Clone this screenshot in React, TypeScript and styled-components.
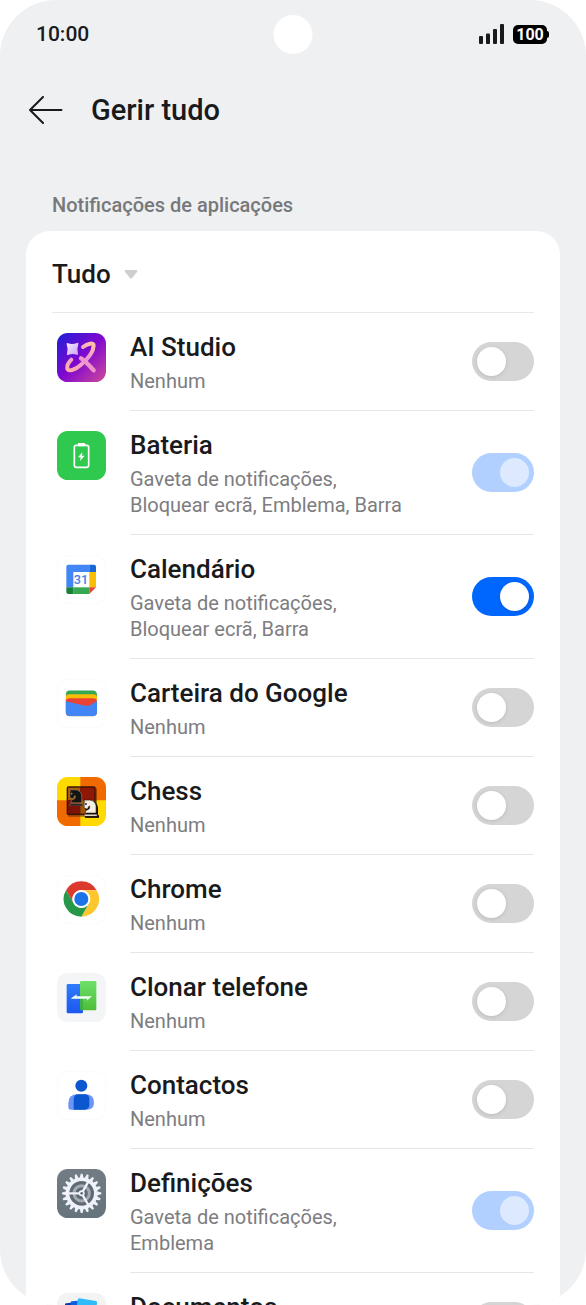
import React, { useState } from "react";
import styled, { createGlobalStyle } from "styled-components";
import { FaChessKnight } from "react-icons/fa";

const GlobalStyle = createGlobalStyle`
  *, *::before, *::after { box-sizing: border-box; }
  body {
    margin: 0;
    background: #fff;
    color: #191a1c;
    font-family: Roboto, "Noto Sans", sans-serif;
  }
`;

const Screen = styled.div`
  position: relative;
  display: flex;
  flex-direction: column;
  height: 100vh;
  overflow: hidden;
  background: #eff0f2;
  border-radius: 56px;
`;

const StatusBar = styled.header`
  display: flex;
  flex: none;
  align-items: center;
  justify-content: space-between;
  height: 68px;
  padding: 0 37px 0 36px;
`;

const Clock = styled.time`
  font-size: 21px;
  font-weight: 500;
  line-height: 24px;
`;

const Camera = styled.div`
  position: absolute;
  top: 15px;
  left: 50%;
  width: 39px;
  height: 39px;
  border-radius: 50%;
  background: #fff;
  transform: translateX(-50%);
`;

const StatusIcons = styled.div`
  display: flex;
  align-items: center;
  gap: 8px;
`;

const Battery = styled.div`
  display: flex;
  align-items: center;
`;

const BatteryBody = styled.span`
  width: 34px;
  height: 19px;
  border-radius: 5px;
  background: #000;
  color: #fff;
  font-size: 16px;
  font-weight: 700;
  line-height: 19px;
  text-align: center;
`;

const BatteryTip = styled.span`
  width: 2px;
  height: 7px;
  border-radius: 0 2px 2px 0;
  background: #000;
`;

const TitleBar = styled.div`
  display: flex;
  flex: none;
  align-items: center;
  gap: 28px;
  height: 84px;
  padding: 0 28px;
`;

const BackButton = styled.button`
  display: flex;
  padding: 0;
  border: 0;
  background: none;
  color: inherit;
  cursor: pointer;
`;

const Title = styled.h1`
  margin: 0;
  font-size: 29px;
  font-weight: 500;
  line-height: 36px;
`;

const Content = styled.main`
  display: flex;
  flex: 1;
  flex-direction: column;
  min-height: 0;
  padding: 40px 26px 0;
`;

const SectionLabel = styled.h2`
  flex: none;
  margin: 0;
  padding: 0 26px 12px;
  color: #77787a;
  font-size: 20px;
  font-weight: 500;
  line-height: 27px;
`;

const Card = styled.section`
  flex: 1;
  min-height: 0;
  overflow-y: auto;
  scrollbar-width: none;
  padding: 0 26px;
  border-radius: 24px 24px 0 0;
  background: #fff;
`;

const FilterRow = styled.div`
  display: flex;
  align-items: center;
  gap: 13px;
  height: 82px;
  padding-top: 5px;
  border-bottom: 1px solid #e8e8e8;
`;

const FilterSelect = styled.select`
  appearance: none;
  field-sizing: content;
  padding: 0;
  border: 0;
  background: none;
  color: inherit;
  font: 500 26px/36px Roboto, "Noto Sans", sans-serif;
`;

const AppList = styled.ul`
  margin: 0;
  padding: 0;
  list-style: none;
`;

const AppRow = styled.li`
  display: flex;
  gap: 24px;
  padding-left: 5px;
`;

const IconTile = styled.svg`
  flex: none;
  width: 49px;
  height: 49px;
  margin-top: 20px;
`;

const RowBody = styled.div`
  display: flex;
  flex: 1;
  align-items: center;
  justify-content: space-between;
  gap: 24px;
  padding: 17px 0 16px;
  border-bottom: 1px solid #e6e6e6;
`;

const RowLabel = styled.label`
  display: block;
  width: 280px;
`;

const AppName = styled.span`
  display: block;
  padding-bottom: 4px;
  font-size: 26px;
  font-weight: 500;
  line-height: 34px;
`;

const AppDetail = styled.span`
  display: block;
  color: #7d7d7f;
  font-size: 20px;
  line-height: 26px;
`;

const Switch = styled.input`
  display: flex;
  flex: none;
  align-items: center;
  appearance: none;
  width: 62px;
  height: 39px;
  margin: 0 0 2px;
  padding: 5px;
  border-radius: 20px;
  background: #d5d5d5;
  cursor: pointer;

  &::before {
    content: "";
    width: 29px;
    height: 29px;
    border-radius: 50%;
    background: #fff;
    box-shadow: 0 1px 4px rgba(0, 0, 0, 0.12);
  }
  &:checked {
    justify-content: flex-end;
    background: #0067fe;
  }
  &:disabled {
    background: #b1d0ff;
    cursor: default;
  }
  &:disabled::before {
    background: #dce9ff;
    box-shadow: none;
  }
`;

const WhiteTile = () => (
  <rect x="1" y="1" width="145" height="145" rx="30" fill="#fff" stroke="#f8f8f8" strokeWidth="2" />
);

const AiStudioIcon = () => (
  <IconTile viewBox="0 0 147 147" aria-hidden="true">
    <defs>
      <linearGradient id="ai-bg" x1="0" y1="0" x2="1" y2="1">
        <stop offset="0" stopColor="#1d1ed8" />
        <stop offset="0.5" stopColor="#8008cf" />
        <stop offset="1" stopColor="#d04a98" />
      </linearGradient>
      <linearGradient id="ai-pen" x1="0.8" y1="0" x2="0.2" y2="1">
        <stop offset="0" stopColor="#ffbfa8" />
        <stop offset="0.45" stopColor="#ea8fe0" />
        <stop offset="1" stopColor="#ffaea8" />
      </linearGradient>
      <linearGradient id="ai-star" x1="0" y1="0" x2="1" y2="1">
        <stop offset="0" stopColor="#f6eaff" />
        <stop offset="1" stopColor="#cda2f4" />
      </linearGradient>
    </defs>
    <rect width="147" height="147" rx="32" fill="url(#ai-bg)" />
    <path d="M78 42 C91 32 111 27 110 38 C109 57 91 79 72 95 C55 110 34 118 31 107 C29 97 35 88 43 80" fill="none" stroke="url(#ai-pen)" strokeWidth="12" strokeLinecap="round" />
    <path d="M72 76 C86 84 98 99 110 112" fill="none" stroke="#ef94c9" strokeWidth="13" strokeLinecap="round" />
    <path d="M29 33 Q28 29 33 31 Q46 36 60 30 Q65 28 64 33 Q59 47 63 62 Q64 67 59 65 Q46 60 33 66 Q28 67 30 62 Q34 48 29 33Z" fill="url(#ai-star)" />
  </IconTile>
);

const BatteryIcon = () => (
  <IconTile viewBox="0 0 147 147" aria-hidden="true">
    <rect width="147" height="147" rx="32" fill="#2fc94f" />
    <rect x="62" y="36" width="23" height="10" rx="4" fill="#fff" />
    <rect x="52" y="43" width="43" height="66" rx="6" fill="none" stroke="#fff" strokeWidth="5" />
    <path d="M76 64 L63 79 H71 L69 90 L83 74 H75Z" fill="#fff" />
  </IconTile>
);

const CalendarIcon = () => (
  <IconTile viewBox="0 0 147 147" aria-hidden="true">
    <WhiteTile />
    <path d="M34 29 H97 V51 H49 V97 H28 V35 Q28 29 34 29Z" fill="#4285f4" />
    <path d="M97 29 H111 Q117 29 117 35 V51 H97Z" fill="#1967d2" />
    <path d="M97 51 H117 V97 H97Z" fill="#fbbc04" />
    <path d="M49 97 H97 V117 H49Z" fill="#34a853" />
    <path d="M28 97 H49 V117 H34 Q28 117 28 111Z" fill="#188038" />
    <path d="M97 97 H117 L97 117Z" fill="#ea4335" />
    <text x="72" y="87" textAnchor="middle" fontFamily="Roboto, sans-serif" fontSize="38" fontWeight="500" fill="#3f7fe8">31</text>
  </IconTile>
);

const WalletIcon = () => (
  <IconTile viewBox="0 0 147 147" aria-hidden="true">
    <clipPath id="wallet-clip">
      <rect x="26" y="34" width="94" height="78" rx="13" />
    </clipPath>
    <WhiteTile />
    <g clipPath="url(#wallet-clip)">
      <rect x="26" y="34" width="94" height="78" fill="#34a853" />
      <path d="M26 56 Q26 46 38 46 H108 Q120 46 120 56 V112 H26Z" fill="#fbbc04" />
      <path d="M26 68 Q26 58 38 58 H108 Q120 58 120 68 V112 H26Z" fill="#ea4335" />
      <path d="M26 67 L84 80 Q93 82 101 77 L120 66 V112 H26Z" fill="#4285f4" />
    </g>
  </IconTile>
);

const ChessIcon = () => (
  <IconTile viewBox="0 0 147 147" aria-hidden="true">
    <clipPath id="chess-clip">
      <rect width="147" height="147" rx="32" />
    </clipPath>
    <g clipPath="url(#chess-clip)">
      <rect width="147" height="147" fill="#ffd900" />
      <path d="M70 0 H147 V70 H70Z M0 70 H70 V147 H0Z" fill="#f06a00" />
    </g>
    <rect x="32" y="32" width="88" height="87" rx="5" fill="#5a2500" opacity="0.55" />
    <rect x="29" y="28" width="87" height="86" rx="5" fill="#3a1206" />
    <path d="M33 32 H70 V70 H33Z" fill="#a55a10" />
    <path d="M70 32 H112 V70 H70Z" fill="#8f1705" />
    <path d="M33 70 H70 V110 H33Z" fill="#7b1205" />
    <path d="M70 70 H112 V110 H70Z" fill="#a45207" />
    <FaChessKnight x="32" y="35" size="52" color="#141414" stroke="#c8a27a" strokeWidth="14" />
    <FaChessKnight x="79" y="70" size="52" color="#160b05" stroke="#160b05" strokeWidth="34" />
    <FaChessKnight x="75" y="66" size="52" color="#f3eee4" stroke="#2b1a10" strokeWidth="18" />
  </IconTile>
);

const ChromeIcon = () => (
  <IconTile viewBox="0 0 147 147" aria-hidden="true">
    <WhiteTile />
    <path d="M27 45.500 A53 53 0 0 1 119 45.500 H73 A26.500 26.500 0 0 0 50 85Z" fill="#dd3a2e" />
    <path d="M119 45.500 A53 53 0 0 1 73 125 L96 85 A26.500 26.500 0 0 0 73 45.500Z" fill="#fcc62c" />
    <path d="M73 125 A53 53 0 0 1 27 45.500 L50 85 A26.500 26.500 0 0 0 96 85Z" fill="#27974a" />
    <circle cx="73" cy="72" r="27" fill="#fff" />
    <circle cx="73" cy="72" r="21" fill="#1a73e8" />
  </IconTile>
);

const CloneIcon = () => (
  <IconTile viewBox="0 0 147 147" aria-hidden="true">
    <defs>
      <linearGradient id="clone-blue" x1="0" y1="0" x2="0" y2="1">
        <stop offset="0" stopColor="#2f7bfa" />
        <stop offset="1" stopColor="#1b57f0" />
      </linearGradient>
      <linearGradient id="clone-green" x1="0" y1="0" x2="0" y2="1">
        <stop offset="0" stopColor="#6ce069" />
        <stop offset="1" stopColor="#4fbd38" />
      </linearGradient>
    </defs>
    <rect width="147" height="147" rx="32" fill="#f4f5f7" />
    <rect x="29" y="33" width="49" height="88" rx="4" fill="url(#clone-blue)" />
    <rect x="69" y="24" width="49" height="88" rx="4" fill="url(#clone-green)" />
    <path d="M69 70 H78 V112 H73 Q69 112 69 108Z" fill="#2a9c50" opacity="0.5" />
    <path d="M43 75 L60 64 L58 70 H105 L89 83 L91 77 H43Z" fill="#f2fff6" />
  </IconTile>
);

const ContactsIcon = () => (
  <IconTile viewBox="0 0 147 147" aria-hidden="true">
    <WhiteTile />
    <circle cx="73" cy="44" r="18" fill="#0b57d0" />
    <path d="M34 108 V97 Q34 70 61 70 H85 Q111 70 111 95 Q111 116 89 116 H41 Q34 116 34 108Z" fill="#6c94f9" />
    <path d="M50 116 V85 Q50 70 65 70 H82 Q97 70 97 85 V100 Q97 116 82 116Z" fill="#0b57d0" />
  </IconTile>
);

const TEETH = 20;
const gearPath = Array.from({ length: TEETH }, (_, i) => {
  const step = (Math.PI * 2) / TEETH;
  const point = (radius: number, turn: number) => {
    const angle = (i + turn) * step;
    return `${(74 + radius * Math.sin(angle)).toFixed(1)} ${(73 - radius * Math.cos(angle)).toFixed(1)}`;
  };
  return `${i ? "L" : "M"}${point(48, -0.36)} L${point(59, -0.15)} L${point(59, 0.15)} L${point(48, 0.36)}`;
}).join(" ");

const SettingsIcon = () => (
  <IconTile viewBox="0 0 147 147" aria-hidden="true">
    <defs>
      <linearGradient id="settings-bg" x1="0" y1="0" x2="0" y2="1">
        <stop offset="0" stopColor="#737c84" />
        <stop offset="1" stopColor="#65737c" />
      </linearGradient>
    </defs>
    <rect width="147" height="147" rx="32" fill="url(#settings-bg)" />
    <path d={`${gearPath}Z`} fill="#eff2f8" />
    <circle cx="74" cy="73" r="37" fill="#5f6a73" />
    <circle cx="74" cy="73" r="23" fill="none" stroke="#a3abb3" strokeWidth="9" />
    <path d="M74 73 H34 M74 73 L94 38 M74 73 L94 108" stroke="#eff2f8" strokeWidth="7" />
    <circle cx="74" cy="73" r="9" fill="#eff2f8" />
    <circle cx="74" cy="73" r="4" fill="#5f6a73" />
  </IconTile>
);

const DocumentsIcon = () => (
  <IconTile viewBox="0 0 147 147" aria-hidden="true">
    <rect width="147" height="147" rx="32" fill="#f3f3f4" />
    <path d="M24 34 Q24 31 28 31 L42 29 V110 H24Z" fill="#0a3ba0" />
    <path d="M41 28 Q41 25 45 25 L62 23 L82 110 H41Z" fill="#0b5fe0" />
    <path d="M62 20 Q63 16 67 16 L117 24 Q121 25 120 29 L110 115 L52 106Z" fill="#30bcfb" />
  </IconTile>
);

interface AppEntry {
  id: string;
  name: string;
  detail: string;
  icon: () => React.ReactElement;
  on?: boolean;
  locked?: boolean;
}

const apps: AppEntry[] = [
  { id: "ai-studio", name: "AI Studio", detail: "Nenhum", icon: AiStudioIcon },
  { id: "bateria", name: "Bateria", detail: "Gaveta de notificações, Bloquear ecrã, Emblema, Barra", icon: BatteryIcon, on: true, locked: true },
  { id: "calendario", name: "Calendário", detail: "Gaveta de notificações, Bloquear ecrã, Barra", icon: CalendarIcon, on: true },
  { id: "carteira", name: "Carteira do Google", detail: "Nenhum", icon: WalletIcon },
  { id: "chess", name: "Chess", detail: "Nenhum", icon: ChessIcon },
  { id: "chrome", name: "Chrome", detail: "Nenhum", icon: ChromeIcon },
  { id: "clonar", name: "Clonar telefone", detail: "Nenhum", icon: CloneIcon },
  { id: "contactos", name: "Contactos", detail: "Nenhum", icon: ContactsIcon },
  { id: "definicoes", name: "Definições", detail: "Gaveta de notificações, Emblema", icon: SettingsIcon, on: true, locked: true },
  { id: "documentos", name: "Documentos", detail: "Nenhum", icon: DocumentsIcon },
];

function AppItem({ app }: { app: AppEntry }) {
  const [on, setOn] = useState(Boolean(app.on));
  const Icon = app.icon;
  return (
    <AppRow>
      <Icon />
      <RowBody>
        <RowLabel htmlFor={app.id}>
          <AppName>{app.name}</AppName>
          <AppDetail>{app.detail}</AppDetail>
        </RowLabel>
        <Switch
          type="checkbox"
          role="switch"
          id={app.id}
          checked={on}
          disabled={app.locked}
          onChange={(event) => setOn(event.target.checked)}
        />
      </RowBody>
    </AppRow>
  );
}

export default function App() {
  return (
    <>
      <GlobalStyle />
      <Screen>
        <StatusBar>
          <Clock>10:00</Clock>
          <StatusIcons>
            <svg width="26" height="20" viewBox="0 0 26 20" fill="#191a1c" aria-hidden="true">
              <rect x="0" y="12" width="4" height="8" rx="1" />
              <rect x="7" y="9.500" width="4" height="10.500" rx="1" />
              <rect x="14" y="5" width="4" height="15" rx="1" />
              <rect x="21" y="0" width="4" height="20" rx="1" />
            </svg>
            <Battery>
              <BatteryBody>100</BatteryBody>
              <BatteryTip />
            </Battery>
          </StatusIcons>
        </StatusBar>
        <Camera />
        <TitleBar>
          <BackButton type="button" aria-label="Voltar">
            <svg width="35" height="28" viewBox="0 0 35 28" fill="none" stroke="#191a1c" strokeWidth="2" strokeLinecap="round" strokeLinejoin="round" aria-hidden="true">
              <path d="M33.500 14 H2 M15 1 L2 14 L15 27" />
            </svg>
          </BackButton>
          <Title>Gerir tudo</Title>
        </TitleBar>
        <Content>
          <SectionLabel>Notificações de aplicações</SectionLabel>
          <Card>
            <FilterRow>
              <FilterSelect aria-label="Filtro" defaultValue="Tudo">
                <option>Tudo</option>
              </FilterSelect>
              <svg width="14" height="9" viewBox="0 0 14 9" fill="#cfcfcf" aria-hidden="true">
                <path d="M1.500 0 H12.500 Q14 0.500 13 2 L8 8 Q7 9 6 8 L1 2 Q0 0.500 1.500 0Z" />
              </svg>
            </FilterRow>
            <AppList>
              {apps.map((app) => (
                <AppItem key={app.id} app={app} />
              ))}
            </AppList>
          </Card>
        </Content>
      </Screen>
    </>
  );
}
